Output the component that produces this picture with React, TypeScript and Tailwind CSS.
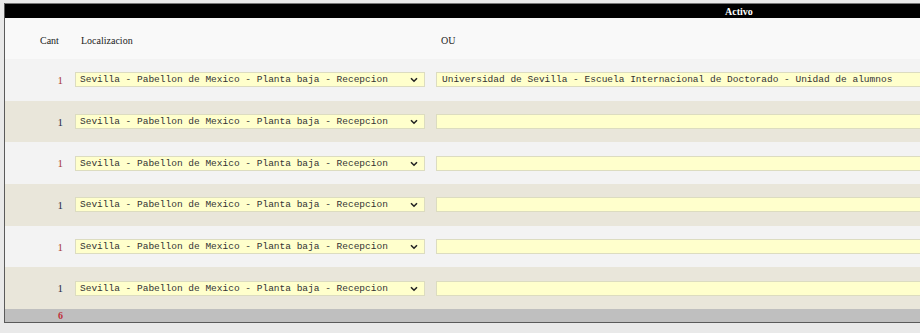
const ROWS = [
  { ou: "Universidad de Sevilla - Escuela Internacional de Doctorado - Unidad de alumnos" },
  { ou: "" },
  { ou: "" },
  { ou: "" },
  { ou: "" },
  { ou: "" },
];

const LOCALIZACION = "Sevilla - Pabellon de Mexico - Planta baja - Recepcion";

function Chevron() {
  return (
    <svg width="8" height="6" viewBox="0 0 8 6" className="pointer-events-none absolute right-[7px] top-[5px]">
      <path d="M1 1.2 L4 4.2 L7 1.2" fill="none" stroke="#222" strokeWidth="1.6" />
    </svg>
  );
}

export default function App() {
  return (
    <div className="h-[333px] w-[920px] overflow-hidden bg-[#e9e9e9] pt-[3px] [font-family:'Liberation_Serif',serif]">
      <div className="ml-[4px] w-[1200px] border-b border-l border-[#5a5a5a]">
        <div className="flex h-[15px] items-center border-t border-[#777] bg-black">
          <span className="ml-[720px] text-[10px] font-bold text-white">Activo</span>
        </div>

        <div className="flex h-[41px] items-center bg-[#f9f9f9] pt-[3px] text-[10px] text-[#222]">
          <span className="ml-[35px] w-[41px]">Cant</span>
          <span className="w-[360px]">Localizacion</span>
          <span>OU</span>
        </div>

        {ROWS.map((row, i) => (
          <div
            key={i}
            className={
              "flex h-[41.67px] items-center " +
              (i % 2 === 0 ? "bg-[#f3f3f3]" : "bg-[#e9e6da]")
            }
          >
            <span
              className={
                "w-[58px] pt-[1px] text-right text-[11px] " +
                (i % 2 === 0 ? "text-[#a83a3a]" : "text-[#2a2a4a]")
              }
            >
              1
            </span>
            <div className="relative ml-[12px] h-[15px] w-[350px]">
              <select
                defaultValue={LOCALIZACION}
                className="block h-[15px] w-full appearance-none border border-[#dcdcc0] bg-[#ffffcc] py-0 pl-[4px] text-[9.5px] leading-[13px] text-[#333] outline-none [font-family:'Liberation_Mono',monospace]"
              >
                <option>{LOCALIZACION}</option>
              </select>
              <Chevron />
            </div>
            <input
              defaultValue={row.ou}
              className="ml-[11px] block h-[15px] w-[620px] border border-[#dcdcc0] bg-[#ffffcc] py-0 pl-[5px] text-[9.5px] leading-[13px] text-[#333] outline-none [font-family:'Liberation_Mono',monospace]"
            />
          </div>
        ))}

        <div className="flex h-[13px] items-center bg-[#bfbfbf]">
          <span className="w-[58px] text-right text-[10px] font-bold text-[#c0303a]">6</span>
        </div>
      </div>
    </div>
  );
}
